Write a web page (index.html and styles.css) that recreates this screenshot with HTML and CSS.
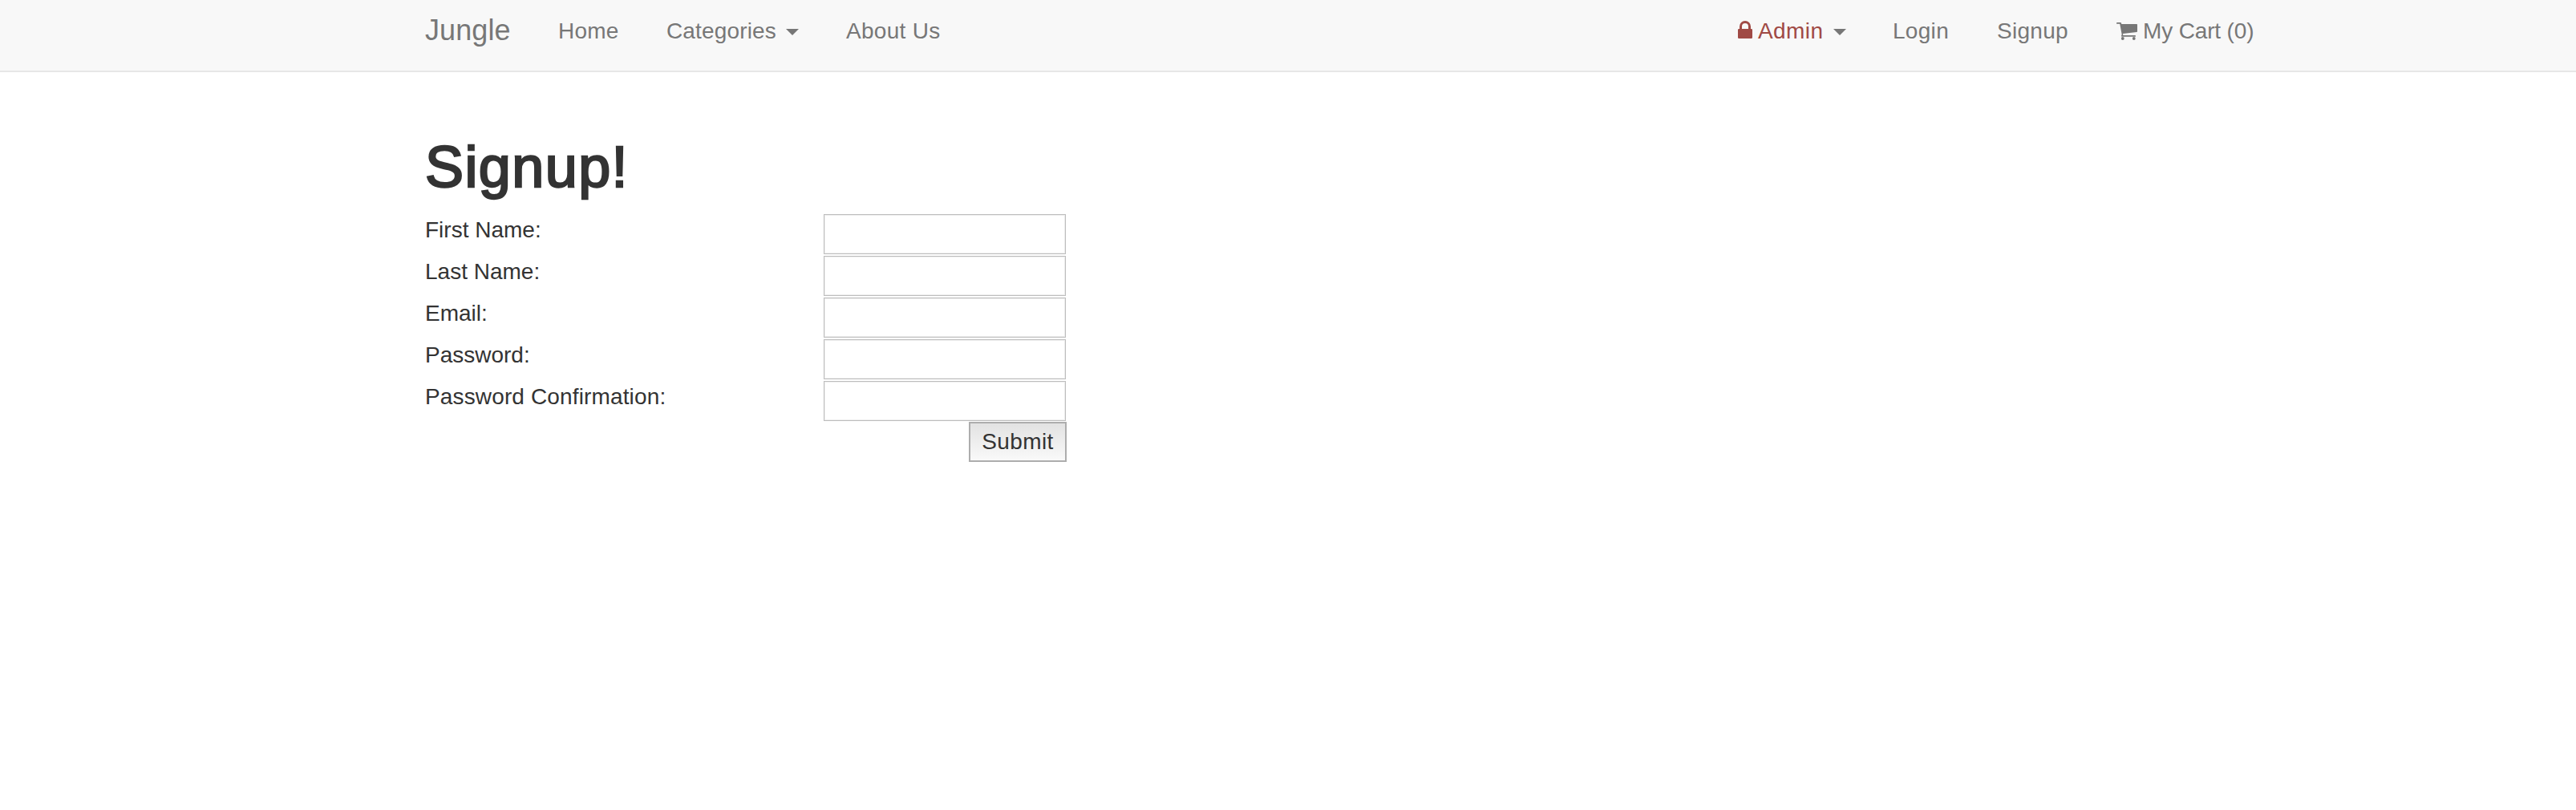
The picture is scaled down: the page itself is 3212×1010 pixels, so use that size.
FILE: index.html
```
<!DOCTYPE html>
<html lang="en">
<head>
<meta charset="utf-8">
<title>Jungle</title>
<link rel="stylesheet" href="styles.css">
</head>
<body>
<nav class="navbar">
  <a class="brand">Jungle</a>
  <a class="link home">Home</a>
  <a class="link categories"><span>Categories</span><i class="caret"></i></a>
  <a class="link about">About Us</a>
  <div class="right">
    <a class="link admin"><svg class="lock" viewBox="0 0 18 22"><path d="M1.200 10H2V7a7 7 0 0 1 14 0v3h.8A1.200 1.200 0 0 1 18 11.200V20.800A1.200 1.200 0 0 1 16.800 22H1.200A1.200 1.200 0 0 1 0 20.800V11.200A1.200 1.200 0 0 1 1.200 10ZM5 10h8V7a4 4 0 0 0-8 0Z"/></svg><span class="danger">Admin</span><i class="caret"></i></a>
    <a class="link login">Login</a>
    <a class="link signup">Signup</a>
    <a class="link cart"><svg class="trolley" viewBox="0 0 26 22"><path d="M.8 0H5Q5.800 0 6 .8L6.300 2H25.200Q26 2 26 2.800V11Q26 11.800 25.200 12L8 14L8.300 15.400Q8.300 15.700 8 16H23.200Q24 16 24 16.900T23.200 17.800H6.800Q6 17.800 6 17Q6 16.500 6.700 15L4.200 1.800H.8Q0 1.800 0 .9T.8 0Z"/><circle cx="7.800" cy="20" r="1.900"/><circle cx="21.800" cy="20" r="1.900"/></svg><span>My Cart (0)</span></a>
  </div>
</nav>
<main class="content">
  <h1 class="title">Signup!</h1>
  <form class="form">
    <label class="field"><span class="label">First Name:</span><input class="input" type="text"></label>
    <label class="field"><span class="label">Last Name:</span><input class="input" type="text"></label>
    <label class="field"><span class="label">Email:</span><input class="input" type="text"></label>
    <label class="field"><span class="label">Password:</span><input class="input" type="password"></label>
    <label class="field"><span class="label confirm">Password Confirmation:</span><input class="input" type="password"></label>
    <button class="submit" type="button">Submit</button>
  </form>
</main>
</body>
</html>
```
FILE: styles.css
```
* { box-sizing: border-box; }
body {
  margin: 0;
  background: #fff;
  color: #333;
  font: 28px/40px "Liberation Sans", Arial, sans-serif;
}
.navbar {
  display: flex;
  height: 90px;
  padding: 19px 402px 0 530px;
  background: #f8f8f8;
  border-bottom: 2px solid #e7e7e7;
  color: #777;
  white-space: nowrap;
}
.brand { width: 166px; font-size: 36px; line-height: 38px; letter-spacing: 0.1px; }
.link { display: flex; }
.home { width: 135px; letter-spacing: 0.2px; }
.categories { width: 224px; letter-spacing: 0.15px; }
.about { letter-spacing: 0.3px; }
.right { display: flex; margin-left: auto; }
.caret {
  flex: none;
  align-self: flex-start;
  margin: 17px 0 0 13px;
  border: 8px solid transparent;
  border-top-color: #777;
  border-bottom: 0;
}
.categories .caret { margin-left: 12px; }
.admin { width: 193px; }
.danger { width: 81px; color: #a04a45; letter-spacing: 0.4px; }
.lock { flex: none; width: 18px; height: 22px; margin: 7px 7px 0 0; fill: #a04a45; }
.login { width: 130px; letter-spacing: 0.3px; }
.signup { width: 149px; letter-spacing: 0.3px; }
.cart { width: 171px; letter-spacing: -0.15px; }
.trolley { flex: none; width: 26px; height: 22px; margin: 9px 7px 0 0; fill: #777; }
.content { padding: 78px 0 0 530px; }
.title {
  margin: 0 0 19px;
  font-size: 72px;
  line-height: 80px;
  font-weight: 400;
  letter-spacing: 1.4px;
  -webkit-text-stroke: 2.400px #333;
}
.form { display: flex; flex-direction: column; width: 800px; }
.field { display: flex; justify-content: space-between; height: 52px; padding-right: 1px; }
.confirm { letter-spacing: 0.14px; }
.input {
  width: 302px;
  height: 50px;
  padding: 4px;
  background: #fff;
  border: 1px solid #bdbdbd;
  border-radius: 0;
  box-shadow: inset 0 0 0 1px #eee;
  font: inherit;
}
.submit {
  align-self: flex-end;
  width: 122px;
  height: 50px;
  margin-top: -1px;
  padding: 0;
  border: 2px solid #adadad;
  border-radius: 0;
  background: linear-gradient(#e2e2e2, #f9f9f9);
  color: #333;
  font: inherit;
  letter-spacing: 0.4px;
}
```
